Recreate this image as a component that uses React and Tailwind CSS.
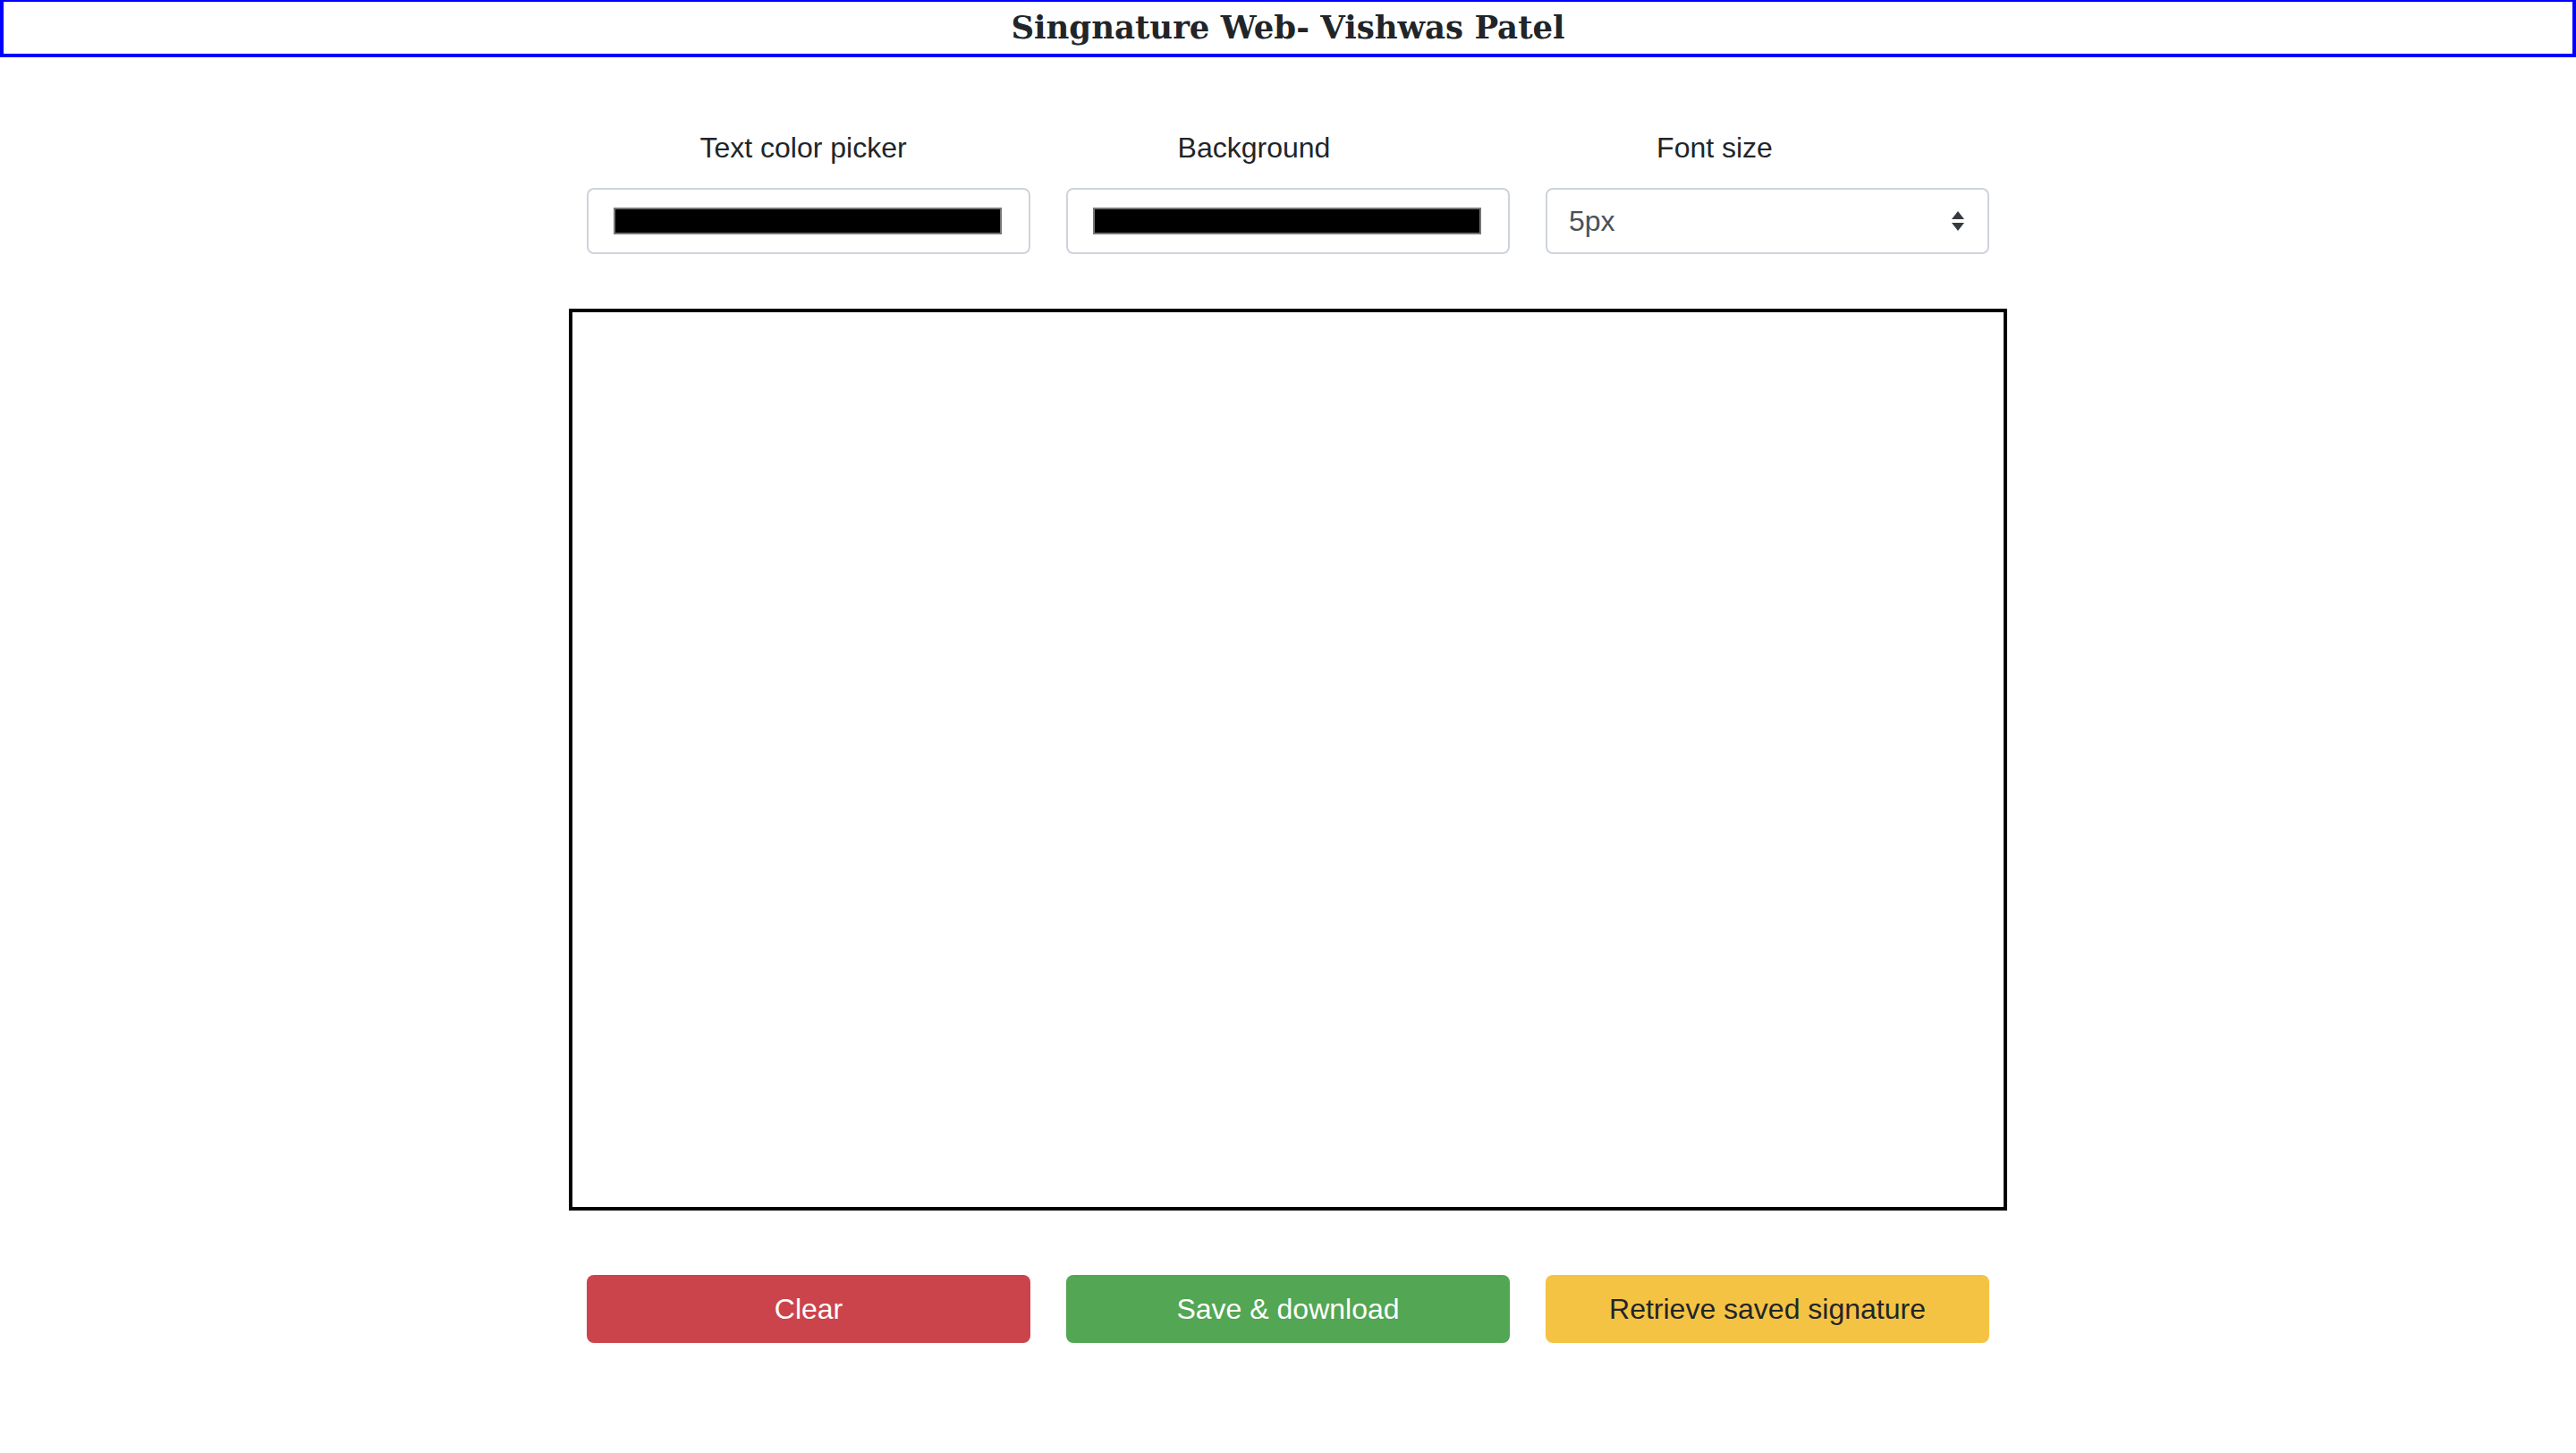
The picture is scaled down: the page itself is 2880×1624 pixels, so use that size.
import React, { useState } from "react";

export default function App() {
  const [fontSize, setFontSize] = useState("5px");

  return (
    <div className="min-h-[1624px] w-full bg-white font-['Liberation_Sans',Arial,sans-serif] text-[#212529]">
      {/* header */}
      <div className="flex h-[64px] items-center justify-center border-x-4 border-t-2 border-b-4 border-[#0000ff]">
        <h1 className="font-['DejaVu_Serif',Georgia,serif] text-[35.5px] font-bold leading-none text-[#212529]">
          Singnature Web- Vishwas Patel
        </h1>
      </div>

      <div className="mx-auto mt-[77px] w-[1568px]">
        {/* labels */}
        <div className="grid grid-cols-3 gap-[40px] text-[32px] leading-[48px]">
          <div className="pr-[12px] text-center">Text color picker</div>
          <div className="pr-[76px] text-center">Background</div>
          <div className="pr-[118px] text-center">Font size</div>
        </div>

        {/* controls */}
        <div className="mt-[21px] grid grid-cols-3 gap-[40px]">
          <div className="flex h-[74px] items-center rounded-[8px] border-2 border-[#ced4da] pl-[28px] pr-[30px]">
            <div className="h-[30px] w-full border-2 border-[#767676] bg-black" />
          </div>
          <div className="flex h-[74px] items-center rounded-[8px] border-2 border-[#ced4da] pl-[28px] pr-[30px]">
            <div className="h-[30px] w-full border-2 border-[#767676] bg-black" />
          </div>
          <div className="relative flex h-[74px] items-center rounded-[8px] border-2 border-[#ced4da]">
            <select
              value={fontSize}
              onChange={(e) => setFontSize(e.target.value)}
              className="h-full w-full appearance-none bg-transparent pl-[24px] text-[32px] text-[#495057] outline-none"
            >
              <option>5px</option>
              <option>10px</option>
              <option>15px</option>
              <option>20px</option>
            </select>
            <svg
              className="pointer-events-none absolute right-[25px] top-1/2 -translate-y-1/2"
              width="16"
              height="26"
              viewBox="0 0 16 26"
            >
              <path d="M8 2 L15 11 L1 11 Z" fill="#343a40" />
              <path d="M1 15 L15 15 L8 24 Z" fill="#343a40" />
            </svg>
          </div>
        </div>

        {/* canvas */}
        <div className="mt-[61px] flex justify-center">
          <div className="h-[1008px] w-[1608px] shrink-0 border-4 border-black bg-white" />
        </div>

        {/* buttons */}
        <div className="mt-[72px] grid grid-cols-3 gap-[40px] text-[32px]">
          <button className="flex h-[76px] items-center justify-center rounded-[8px] bg-[#cc444b] text-white">
            Clear
          </button>
          <button className="flex h-[76px] items-center justify-center rounded-[8px] bg-[#53a653] text-white">
            Save &amp; download
          </button>
          <button className="flex h-[76px] items-center justify-center rounded-[8px] bg-[#f5c344] text-[#212529]">
            Retrieve saved signature
          </button>
        </div>
      </div>
    </div>
  );
}
